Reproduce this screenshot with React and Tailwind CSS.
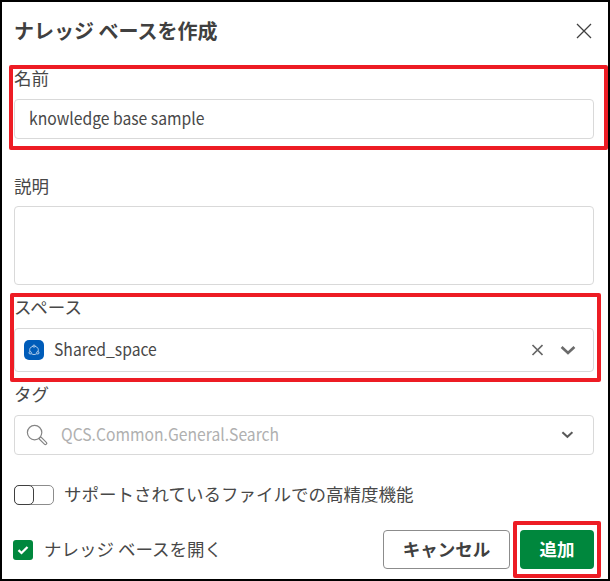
import React from "react";

const field = "h-10 w-full rounded border border-[#d9d9d9] bg-white flex items-center";
const label = "flex items-center h-6 whitespace-pre";
const latin = "origin-left scale-x-[0.923] text-[17px] whitespace-pre -mt-[2px]";

function Highlight({ className }) {
  return <div className={"pointer-events-none absolute rounded-[2px] border-4 border-[#ed1c24] " + className} />;
}

function SpaceIcon() {
  return (
    <svg className="h-5 w-5 shrink-0" viewBox="0 0 20 20" fill="none">
      <rect width="20" height="20" rx="5" fill="#005cb9" />
      <g stroke="#e4eefa" strokeWidth="0.75">
        <path d="M8.9 6.3A4.3 4.3 0 0 0 5.9 11.5M11.1 6.3A4.3 4.3 0 0 1 14.1 11.5M7.3 13.9Q10 15.3 12.7 13.9" />
        <circle cx="10" cy="6.1" r="1.1" />
        <circle cx="6.2" cy="12.8" r="1.2" />
        <circle cx="13.8" cy="12.8" r="1.2" />
      </g>
    </svg>
  );
}

function SearchIcon() {
  return (
    <svg className="h-[22px] w-[22px] shrink-0" viewBox="0 0 22 22" fill="none" stroke="#858585" strokeWidth="1.2">
      <circle cx="8.6" cy="8.6" r="7.2" />
      <path d="M12.9 14.7l1.9-1.9 5.5 5.5a1.3 1.3 0 0 1-1.9 1.9z" />
    </svg>
  );
}

export default function App() {
  return (
    <div
      lang="ja"
      className="relative box-border flex h-[581px] w-[610px] flex-col border-2 border-black bg-white pl-3 pr-[14px] text-[17.5px] text-[#484848] font-['Noto_Sans_CJK_JP',sans-serif]"
    >
      <header className="mt-[14px] flex h-[30px] items-center justify-between text-[#404040]">
        <h1 className="whitespace-pre text-[20px] font-bold">ナレッジ ベースを作成</h1>
        <svg className="mr-[2px] h-4 w-4" viewBox="0 0 16 16" fill="none" stroke="#404040" strokeWidth="1.3">
          <path d="M1 1l14 14M15 1L1 15" />
        </svg>
      </header>

      <label className={label + " mt-5"}>名前</label>
      <div className={field + " mt-[9px] pl-[14px]"}>
        <span className={latin}>knowledge base sample</span>
      </div>

      <label className={label + " mt-[35px]"}>説明</label>
      <div className="mt-[8px] h-[79px] w-full rounded border border-[#d9d9d9]" />

      <label className={label + " mt-[10px]"}>スペース</label>
      <div className="mt-[9px] flex h-11 w-full items-center rounded border border-[#d9d9d9] pl-[9px] pr-[17px]">
        <SpaceIcon />
        <span className={latin + " ml-[10px] mr-auto"}>Shared_space</span>
        <svg className="h-3 w-3" viewBox="0 0 12 12" fill="none" stroke="#666" strokeWidth="1.7">
          <path d="M1.5 1l10 10M11.5 1L1.5 11" />
        </svg>
        <svg className="ml-[17px] h-4 w-4" viewBox="0 0 16 16" fill="none" stroke="#6b6b6b" strokeWidth="2.7">
          <path d="M1.6 5l6.4 6 6.4-6" />
        </svg>
      </div>

      <label className={label + " mt-[10px]"}>タグ</label>
      <div className={field + " mt-[9px] pl-[11px] pr-5"}>
        <SearchIcon />
        <span className={latin + " ml-[13px] mr-auto text-[#b0b0b0]"}>QCS.Common.General.Search</span>
        <svg className="h-3 w-3" viewBox="0 0 12 12" fill="none" stroke="#595959" strokeWidth="2">
          <path d="M1.4 3.2l5 4.6 5-4.6" />
        </svg>
      </div>

      <div className="mt-[30px] flex h-5 items-center">
        <div className="h-5 w-10 shrink-0 rounded-[5px] border border-[#8c8c8c]">
          <div className="-ml-px -mt-px h-5 w-5 rounded-[5px] border border-[#404040] bg-white" />
        </div>
        <span className="-mt-[2px] ml-[10px] whitespace-pre">サポートされているファイルでの高精度機能</span>
      </div>

      <footer className="mt-[25px] flex h-[39px] items-center">
        <div className="-ml-px flex h-5 w-5 items-center justify-center rounded-[3px] bg-[#00873d]">
          <svg className="h-3 w-3" viewBox="0 0 12 12" fill="none" stroke="#fff" strokeWidth="2.3">
            <path d="M1.5 6.2l3 2.8 6-6" />
          </svg>
        </div>
        <span className="ml-[11px] grow whitespace-pre">ナレッジ ベースを開く</span>
        <button className="h-[39px] w-[127px] rounded border border-[#8c8c8c] font-bold text-[#404040]">キャンセル</button>
        <button className="ml-[10px] h-[39px] w-[74px] rounded bg-[#00873d] font-bold text-white">追加</button>
      </footer>

      <Highlight className="left-[7px] top-[63px] h-[85px] w-[599px]" />
      <Highlight className="left-[8px] top-[291px] h-[89px] w-[591px]" />
      <Highlight className="left-[511px] top-[519px] h-[57px] w-[88px]" />
    </div>
  );
}
